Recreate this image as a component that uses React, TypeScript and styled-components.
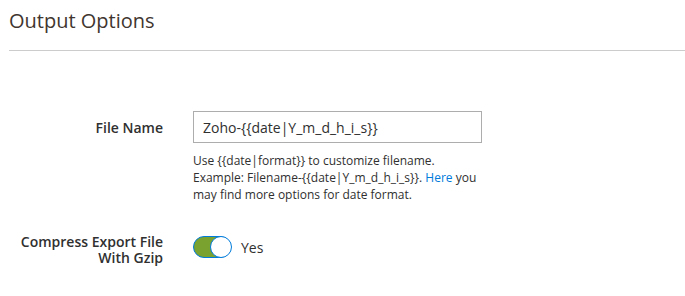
import React, { useState } from "react"
import styled, { createGlobalStyle } from "styled-components"

const GlobalStyle = createGlobalStyle`
  body {
    margin: 0;
    background: #fff;
    font-family: "Open Sans", "Liberation Sans", sans-serif;
    color: #303030;
  }
`

const App = () => {
	const [fileName, setFileName] = useState("Zoho-{{date|Y_m_d_h_i_s}}")
	const [gzip, setGzip] = useState(true)
	return (
		<>
			<GlobalStyle />
			<Section>
				<Title>Output Options</Title>
				<Fields>
					<Row>
						<Label $top={9}>File Name</Label>
						<Control>
							<Input value={fileName} onChange={e => setFileName(e.target.value)} />
							<Note>
								<NoteLine>Use {"{{date|format}}"} to customize filename.</NoteLine>
								<NoteLine>
									Example: Filename-{"{{date|Y_m_d_h_i_s}}"}. <NoteLink href="#">Here</NoteLink> you
								</NoteLine>
								<NoteLine>may find more options for date format.</NoteLine>
							</Note>
						</Control>
					</Row>
					<Row>
						<Label $top={2}>Compress Export File With Gzip</Label>
						<SwitchWrap onClick={() => setGzip(!gzip)}>
							<Switch $on={gzip}>
								<Knob $on={gzip} />
							</Switch>
							<SwitchText>{gzip ? "Yes" : "No"}</SwitchText>
						</SwitchWrap>
					</Row>
				</Fields>
			</Section>
		</>
	)
}
export default App

const Section = styled.div`
	padding: 0 0 0 9px;
`
const Title = styled.h2`
	margin: 0;
	padding: 5px 0 14px;
	font-size: 20px;
	font-weight: 400;
	line-height: 31px;
	color: #41362f;
	border-bottom: 1px solid #cccccc;
`
const Fields = styled.div`
	display: flex;
	flex-direction: column;
	gap: 29px;
	padding-top: 60px;
`
const Row = styled.div`
	display: grid;
	grid-template-columns: 154px 289px;
	column-gap: 30px;
	align-items: start;
`
const Label = styled.label<{ $top: number }>`
	font-size: 14px;
	font-weight: 600;
	line-height: 16px;
	text-align: right;
	padding-top: ${p => p.$top}px;
	color: #303030;
`
const Control = styled.div`
	display: flex;
	flex-direction: column;
`
const Input = styled.input`
	box-sizing: border-box;
	width: 289px;
	height: 32px;
	border: 1px solid #adadad;
	padding: 0 9px;
	font-family: inherit;
	font-size: 14px;
	color: #303030;
	outline: none;
`
const Note = styled.div`
	margin-top: 9px;
	font-size: 12px;
	line-height: 17px;
	color: #303030;
`
const NoteLine = styled.div`
	white-space: nowrap;
`
const NoteLink = styled.a`
	color: #007bdb;
	text-decoration: none;
`
const SwitchWrap = styled.div`
	display: flex;
	align-items: center;
	gap: 10px;
	padding-top: 4px;
	cursor: pointer;
`
const Switch = styled.div<{ $on: boolean }>`
	box-sizing: border-box;
	position: relative;
	width: 38px;
	height: 22px;
	border-radius: 11px;
	border: 1px solid ${p => (p.$on ? "#007bdb" : "#adadad")};
	background: ${p => (p.$on ? "#79a22e" : "#e3e3e3")};
`
const Knob = styled.span<{ $on: boolean }>`
	box-sizing: border-box;
	position: absolute;
	top: -1px;
	left: ${p => (p.$on ? "16px" : "-1px")};
	width: 22px;
	height: 22px;
	border-radius: 50%;
	background: #fff;
	border: 1px solid #007bdb;
`
const SwitchText = styled.span`
	font-size: 14px;
	color: #303030;
`
